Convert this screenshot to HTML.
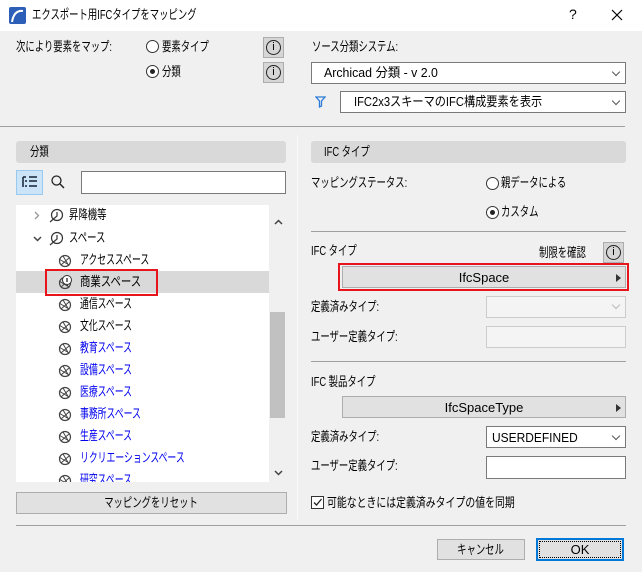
<!DOCTYPE html><html><head><meta charset="utf-8"><style>
*{box-sizing:border-box;margin:0;padding:0}
body{width:642px;height:572px;background:#f0f0f0;font-family:"Liberation Sans","Noto Sans CJK JP",sans-serif;font-size:12px;color:#000;position:relative;overflow:hidden}
.a{position:absolute;white-space:nowrap}
.t{line-height:16px}
.j{font-size:13px;transform:scaleX(.72);transform-origin:0 50%}
.jc{display:inline-block;font-size:13px;transform:scaleX(.72);transform-origin:50% 50%}
.title{left:0;top:0;width:642px;height:31px;background:#fff}
.radio{width:13px;height:13px;border:1px solid #333;border-radius:50%;background:#fff}
.radio.on::after{content:"";position:absolute;left:3px;top:3px;width:5px;height:5px;border-radius:50%;background:#222}
.info{width:21px;height:21px;background:#d6d6d6;border:1px solid #adadad}
.info::after{content:"i";position:absolute;left:2px;top:2px;width:15px;height:15px;border:1.3px solid #222;border-radius:50%;box-sizing:border-box;font:11px "Liberation Sans",sans-serif;text-align:center;line-height:12px}
.dd{background:#fff;border:1px solid #7a7a7a}
.dd .ch{position:absolute;right:6px;top:6px;width:6px;height:6px;border-right:1px solid #555;border-bottom:1px solid #555;transform:rotate(45deg)}
.hdr{background:#d9d9d9;border-radius:3px}
.sep{height:1px;background:#a0a0a0}
.btn{background:#e1e1e1;border:1px solid #adadad;text-align:center}
.tri{position:absolute;right:4px;top:7px;width:0;height:0;border-left:5px solid #333;border-top:4px solid transparent;border-bottom:4px solid transparent}
.it{left:80px;line-height:16px;font-size:13px;transform:scaleX(.68);transform-origin:0 50%}
.blue{color:#0000ee}
</style></head><body>
<div class="a title"></div>
<svg class="a" style="left:9px;top:7px" width="17" height="17"><rect width="17" height="17" rx="2" fill="#2d5fb8"/><path d="M3 15 Q5 3 14 4" stroke="#fff" stroke-width="2" fill="none"/></svg>
<div class="a t j" style="left:32px;top:7px">エクスポート用IFCタイプをマッピング</div>
<div class="a" style="left:569px;top:6px;font-size:14px">?</div>
<svg class="a" style="left:611px;top:9px" width="12" height="12"><path d="M1 1L11 11M11 1L1 11" stroke="#000" stroke-width="1.2"/></svg>

<div class="a t j" style="left:16px;top:39px">次により要素をマップ:</div>
<div class="a radio" style="left:146px;top:40px"></div><div class="a t j" style="left:162px;top:39px">要素タイプ</div>
<div class="a radio on" style="left:146px;top:65px"></div><div class="a t j" style="left:162px;top:64px">分類</div>
<div class="a info" style="left:263px;top:37px"></div>
<div class="a info" style="left:263px;top:62px"></div>

<div class="a t j" style="left:312px;top:39px">ソース分類システム:</div>
<div class="a dd" style="left:311px;top:62px;width:315px;height:22px"><span class="a t" style="left:12px;top:2px;font-size:13px;transform:scaleX(.95);transform-origin:0 50%">Archicad 分類 - v 2.0</span><span class="ch"></span></div>
<svg class="a" style="left:315px;top:96px" width="11" height="12"><path d="M1 1H10L6.5 5V10L4.5 11V5Z" fill="none" stroke="#2a7ad8" stroke-width="1.3"/></svg>
<div class="a dd" style="left:340px;top:91px;width:286px;height:22px"><span class="a t" style="left:13px;top:2px;font-size:13px;transform:scaleX(.86);transform-origin:0 50%">IFC2x3スキーマのIFC構成要素を表示</span><span class="ch"></span></div>

<div class="a sep" style="left:0;top:126px;width:625px"></div>

<div class="a hdr" style="left:16px;top:141px;width:270px;height:22px"></div>
<div class="a t j" style="left:30px;top:144px">分類</div>
<div class="a" style="left:16px;top:170px;width:27px;height:25px;background:#cce4f7;border:1px solid #99c9ef"></div>
<svg class="a" style="left:22px;top:176px" width="16" height="13"><path d="M1 1h3M1 1v10M3 5h2M3 10h2M7 1h8M7 5h8M7 10h8" stroke="#123" stroke-width="1.5"/></svg>
<svg class="a" style="left:50px;top:174px" width="16" height="16"><circle cx="6.5" cy="6.5" r="4.5" fill="none" stroke="#222" stroke-width="1.3"/><path d="M10 10l4 4" stroke="#222" stroke-width="1.5"/></svg>
<div class="a" style="left:81px;top:171px;width:205px;height:23px;background:#fff;border:1px solid #7a7a7a"></div>

<div class="a" style="left:16px;top:205px;width:253px;height:277px;background:#fff;overflow:hidden">
 <div class="a" style="left:0;top:66px;width:253px;height:22px;background:#d9d9d9"></div>
</div>
<div class="a" style="left:270px;top:205px;width:16px;height:277px;background:#f0f0f0"></div>
<div class="a" style="left:270px;top:312px;width:15px;height:106px;background:#c1c1c1"></div>
<svg class="a" style="left:274px;top:219px" width="9" height="6"><path d="M1 5L4.5 1.5L8 5" stroke="#444" stroke-width="1.5" fill="none"/></svg>
<svg class="a" style="left:274px;top:470px" width="9" height="6"><path d="M1 1L4.5 4.5L8 1" stroke="#444" stroke-width="1.5" fill="none"/></svg>

<svg class="a" style="left:34px;top:211px" width="6" height="9"><path d="M1 1L4.5 4.5L1 8" stroke="#999" stroke-width="1.3" fill="none"/></svg>
<svg class="a" style="left:33px;top:236px" width="9" height="6"><path d="M1 1L4.5 4.5L8 1" stroke="#444" stroke-width="1.5" fill="none"/></svg>
<svg class="a" style="left:48px;top:208px" width="16" height="16"><circle cx="9" cy="7" r="5.5" fill="none" stroke="#333" stroke-width="1.2"/><path d="M9 4v4l-7 6" stroke="#333" stroke-width="1.2" fill="none"/></svg>
<svg class="a" style="left:48px;top:231px" width="16" height="16"><circle cx="9" cy="7" r="5.5" fill="none" stroke="#333" stroke-width="1.2"/><path d="M9 4v4l-7 6" stroke="#333" stroke-width="1.2" fill="none"/></svg>
<div class="a t j" style="left:69px;top:207px">昇降機等</div>
<div class="a t j" style="left:69px;top:230px">スペース</div>

<svg width="0" height="0" style="position:absolute"><defs><g id="g"><circle cx="8" cy="8" r="5.5" fill="none" stroke="#444" stroke-width="1.2"/><path d="M2 6l10 6M4 12l8-7M6 3l6 10" stroke="#444" stroke-width="1"/></g></defs></svg>
<svg class="a" style="left:57px;top:253px" width="16" height="16"><use href="#g"/></svg><div class="a it" style="top:252px">アクセススペース</div>
<svg class="a" style="left:57px;top:275px" width="16" height="16"><use href="#g"/><circle cx="10" cy="5" r="4.5" fill="#fff" stroke="#333"/><path d="M10 3v4" stroke="#333" stroke-width="1.4"/></svg><div class="a it" style="top:274px;transform:scaleX(.8)">商業スペース</div>
<div class="a" style="left:45px;top:269px;width:113px;height:27px;border:2px solid #e8141b"></div>
<svg class="a" style="left:57px;top:297px" width="16" height="16"><use href="#g"/></svg><div class="a it" style="top:296px">通信スペース</div>
<svg class="a" style="left:57px;top:319px" width="16" height="16"><use href="#g"/></svg><div class="a it" style="top:318px">文化スペース</div>
<svg class="a" style="left:57px;top:341px" width="16" height="16"><use href="#g"/></svg><div class="a it blue" style="top:340px">教育スペース</div>
<svg class="a" style="left:57px;top:363px" width="16" height="16"><use href="#g"/></svg><div class="a it blue" style="top:362px">設備スペース</div>
<svg class="a" style="left:57px;top:385px" width="16" height="16"><use href="#g"/></svg><div class="a it blue" style="top:384px">医療スペース</div>
<svg class="a" style="left:57px;top:407px" width="16" height="16"><use href="#g"/></svg><div class="a it blue" style="top:406px">事務所スペース</div>
<svg class="a" style="left:57px;top:429px" width="16" height="16"><use href="#g"/></svg><div class="a it blue" style="top:428px">生産スペース</div>
<svg class="a" style="left:57px;top:451px" width="16" height="16"><use href="#g"/></svg><div class="a it blue" style="top:450px">リクリエーションスペース</div>
<div class="a" style="left:16px;top:472px;width:253px;height:10px;overflow:hidden"><svg class="a" style="left:41px;top:1px" width="16" height="16"><use href="#g"/></svg><div class="a blue t" style="left:64px;top:0px;font-size:13px;transform:scaleX(.68);transform-origin:0 50%">研究スペース</div></div>

<div class="a btn t" style="left:16px;top:492px;width:271px;height:22px;padding-top:2px"><span class="jc">マッピングをリセット</span></div>

<div class="a" style="left:297px;top:135px;width:1px;height:385px;background:#fafafa"></div>

<div class="a hdr" style="left:311px;top:141px;width:315px;height:22px"></div>
<div class="a t j" style="left:324px;top:144px">IFC タイプ</div>
<div class="a t j" style="left:311px;top:175px">マッピングステータス:</div>
<div class="a radio" style="left:486px;top:177px"></div><div class="a t j" style="left:501px;top:175px">親データによる</div>
<div class="a radio on" style="left:486px;top:206px"></div><div class="a t j" style="left:501px;top:204px">カスタム</div>
<div class="a sep" style="left:311px;top:231px;width:315px"></div>
<div class="a t j" style="left:311px;top:243px">IFC タイプ</div>
<div class="a t j" style="left:539px;top:245px">制限を確認</div>
<div class="a info" style="left:603px;top:242px"></div>
<div class="a" style="left:338px;top:263px;width:291px;height:28px;border:2px solid #e8141b"></div>
<div class="a btn t" style="left:342px;top:266px;width:284px;height:22px;padding-top:3px;font-size:13px">IfcSpace<span class="tri"></span></div>
<div class="a t j" style="left:311px;top:299px">定義済みタイプ:</div>
<div class="a" style="left:486px;top:296px;width:140px;height:22px;background:#f4f4f4;border:1px solid #ccc"><span class="a" style="right:6px;top:5px;width:6px;height:6px;border-right:1px solid #bbb;border-bottom:1px solid #bbb;transform:rotate(45deg)"></span></div>
<div class="a t j" style="left:311px;top:329px">ユーザー定義タイプ:</div>
<div class="a" style="left:486px;top:326px;width:140px;height:22px;background:#f4f4f4;border:1px solid #ccc"></div>
<div class="a sep" style="left:311px;top:361px;width:315px"></div>
<div class="a t j" style="left:311px;top:374px">IFC 製品タイプ</div>
<div class="a btn t" style="left:342px;top:396px;width:284px;height:22px;padding-top:3px;font-size:13px">IfcSpaceType<span class="tri"></span></div>
<div class="a t j" style="left:311px;top:429px">定義済みタイプ:</div>
<div class="a dd" style="left:486px;top:426px;width:140px;height:22px"><span class="a t" style="left:5px;top:3px;font-size:13px;transform:scaleX(.92);transform-origin:0 50%">USERDEFINED</span><span class="ch"></span></div>
<div class="a t j" style="left:311px;top:458px">ユーザー定義タイプ:</div>
<div class="a" style="left:486px;top:456px;width:140px;height:23px;background:#fff;border:1px solid #7a7a7a"></div>
<div class="a" style="left:311px;top:496px;width:13px;height:13px;background:#fff;border:1px solid #333"></div>
<svg class="a" style="left:312px;top:497px" width="11" height="11"><path d="M2 5.5l2.5 2.5 5-6" stroke="#222" stroke-width="1.3" fill="none"/></svg>
<div class="a t j" style="left:327px;top:495px;transform:scaleX(.76)">可能なときには定義済みタイプの値を同期</div>

<div class="a sep" style="left:16px;top:525px;width:610px"></div>
<div class="a btn t" style="left:437px;top:539px;width:88px;height:21px;padding-top:2px"><span class="jc">キャンセル</span></div>
<div class="a btn t" style="left:536px;top:538px;width:88px;height:23px;border:2px solid #0078d7;padding-top:2px;font-size:13px"><div style="position:absolute;left:1px;top:1px;right:1px;bottom:1px;border:1px dotted #000"></div>OK</div>
</body></html>
